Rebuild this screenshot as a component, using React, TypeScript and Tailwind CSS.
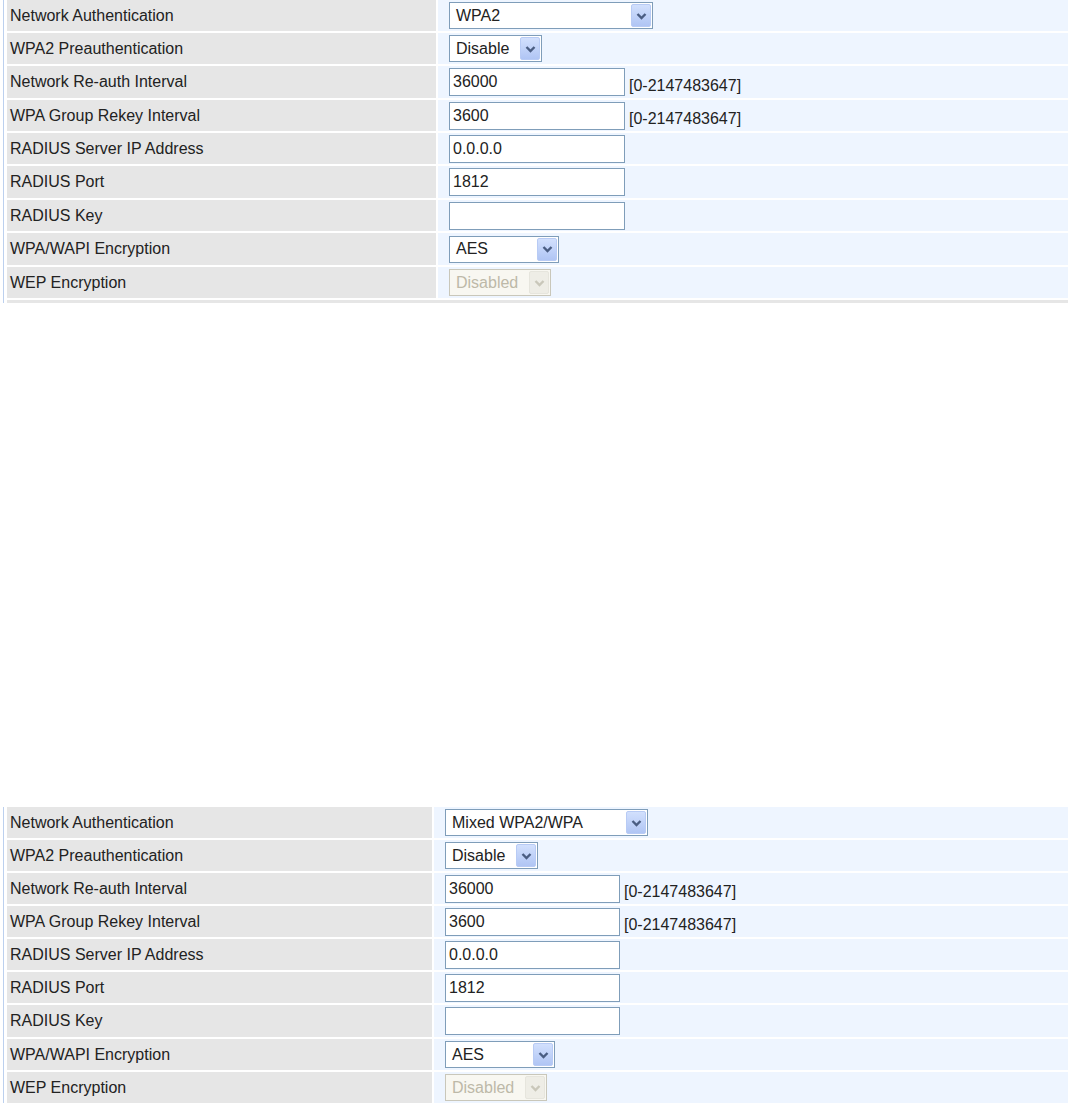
import React from 'react';

type Field =
  | { kind: 'select'; value: string; width: number; disabled?: boolean }
  | { kind: 'input'; value: string; range?: boolean };

type Row = { label: string; field: Field; h: number };

const Chevron = ({ disabled }: { disabled?: boolean }) => (
  <svg width="11" height="8" viewBox="0 0 11 8" className="block">
    <polyline
      points="1.5,2 5.5,6 9.5,2"
      fill="none"
      stroke={disabled ? '#c9c7ba' : '#4a5d82'}
      strokeWidth="2.4"
    />
  </svg>
);

const FakeSelect = ({ value, width, disabled }: { value: string; width: number; disabled?: boolean }) => (
  <div
    className={`flex h-[27px] items-center border pl-[6px] pr-[1px] ${
      disabled ? 'border-[#c9c7ba] bg-[#f8f7f1] text-[#bdb9a8]' : 'border-[#7f9db9] bg-white text-[#222]'
    }`}
    style={{ width }}
  >
    <span className="flex-1 whitespace-nowrap leading-none">{value}</span>
    <span
      className={`flex h-[23px] w-[20px] items-center justify-center rounded-[2px] border ${
        disabled
          ? 'border-[#e6e5dd] bg-[#eeede6]'
          : 'border-[#b8cbf5] bg-gradient-to-b from-[#d2e0fd] to-[#b0c5f4]'
      }`}
    >
      <Chevron disabled={disabled} />
    </span>
  </div>
);

const FakeInput = ({ value, width }: { value: string; width: number }) => (
  <div
    className="flex h-[28px] items-center border border-[#7f9db9] bg-white pl-[3px] text-[#222] leading-none"
    style={{ width }}
  >
    {value}
  </div>
);

const Table = ({
  rows,
  labelW,
  authValue,
  authW,
  inputW,
  tail,
}: {
  rows: Row[];
  labelW: string;
  authValue: string;
  authW: number;
  inputW: number;
  tail?: boolean;
}) => (
  <div className="ml-[3px] border-l border-[#bcd0ee] pl-[3px]">
    <div className="flex flex-col gap-[2px]">
      {rows.map((r, i) => {
        const f = i === 0 && r.field.kind === 'select' ? { ...r.field, value: authValue, width: authW } : r.field;
        return (
          <div key={r.label} className="flex gap-[2px]" style={{ height: r.h }}>
            <div className={`${labelW} flex items-center bg-[#e6e6e6] pl-[3px] text-[#222]`}>{r.label}</div>
            <div className="flex flex-1 items-center bg-[#eef5ff] pl-[11px]">
              {f.kind === 'select' ? (
                <FakeSelect value={f.value} width={f.width} disabled={f.disabled} />
              ) : (
                <>
                  <FakeInput value={f.value} width={inputW} />
                  {f.range && <span className="ml-[4px] mt-[7px] text-[#222]">[0-2147483647]</span>}
                </>
              )}
            </div>
          </div>
        );
      })}
      {tail && <div className="h-[3px] bg-[#e6e6e6]" />}
    </div>
  </div>
);

const baseRows = (hs: number[]): Row[] => [
  { label: 'Network Authentication', field: { kind: 'select', value: 'WPA2', width: 204 }, h: hs[0] },
  { label: 'WPA2 Preauthentication', field: { kind: 'select', value: 'Disable', width: 93 }, h: hs[1] },
  { label: 'Network Re-auth Interval', field: { kind: 'input', value: '36000', range: true }, h: hs[2] },
  { label: 'WPA Group Rekey Interval', field: { kind: 'input', value: '3600', range: true }, h: hs[3] },
  { label: 'RADIUS Server IP Address', field: { kind: 'input', value: '0.0.0.0' }, h: hs[4] },
  { label: 'RADIUS Port', field: { kind: 'input', value: '1812' }, h: hs[5] },
  { label: 'RADIUS Key', field: { kind: 'input', value: '' }, h: hs[6] },
  { label: 'WPA/WAPI Encryption', field: { kind: 'select', value: 'AES', width: 110 }, h: hs[7] },
  { label: 'WEP Encryption', field: { kind: 'select', value: 'Disabled', width: 102, disabled: true }, h: hs[8] },
];

export default function App() {
  return (
    <div className="h-[1106px] w-[1068px] overflow-hidden bg-white text-[16px]" style={{ fontFamily: '"Liberation Sans", Arial, sans-serif' }}>
      <Table
        rows={baseRows([31, 31, 32, 31, 31, 32, 31, 32, 31])}
        labelW="w-[429px]"
        authValue="WPA2"
        authW={204}
        inputW={176}
        tail
      />
      <div className="h-[504px]" />
      <Table
        rows={baseRows([31, 31, 31, 31, 31, 31, 32, 31, 31])}
        labelW="w-[425px]"
        authValue="Mixed WPA2/WPA"
        authW={203}
        inputW={175}
      />
    </div>
  );
}
